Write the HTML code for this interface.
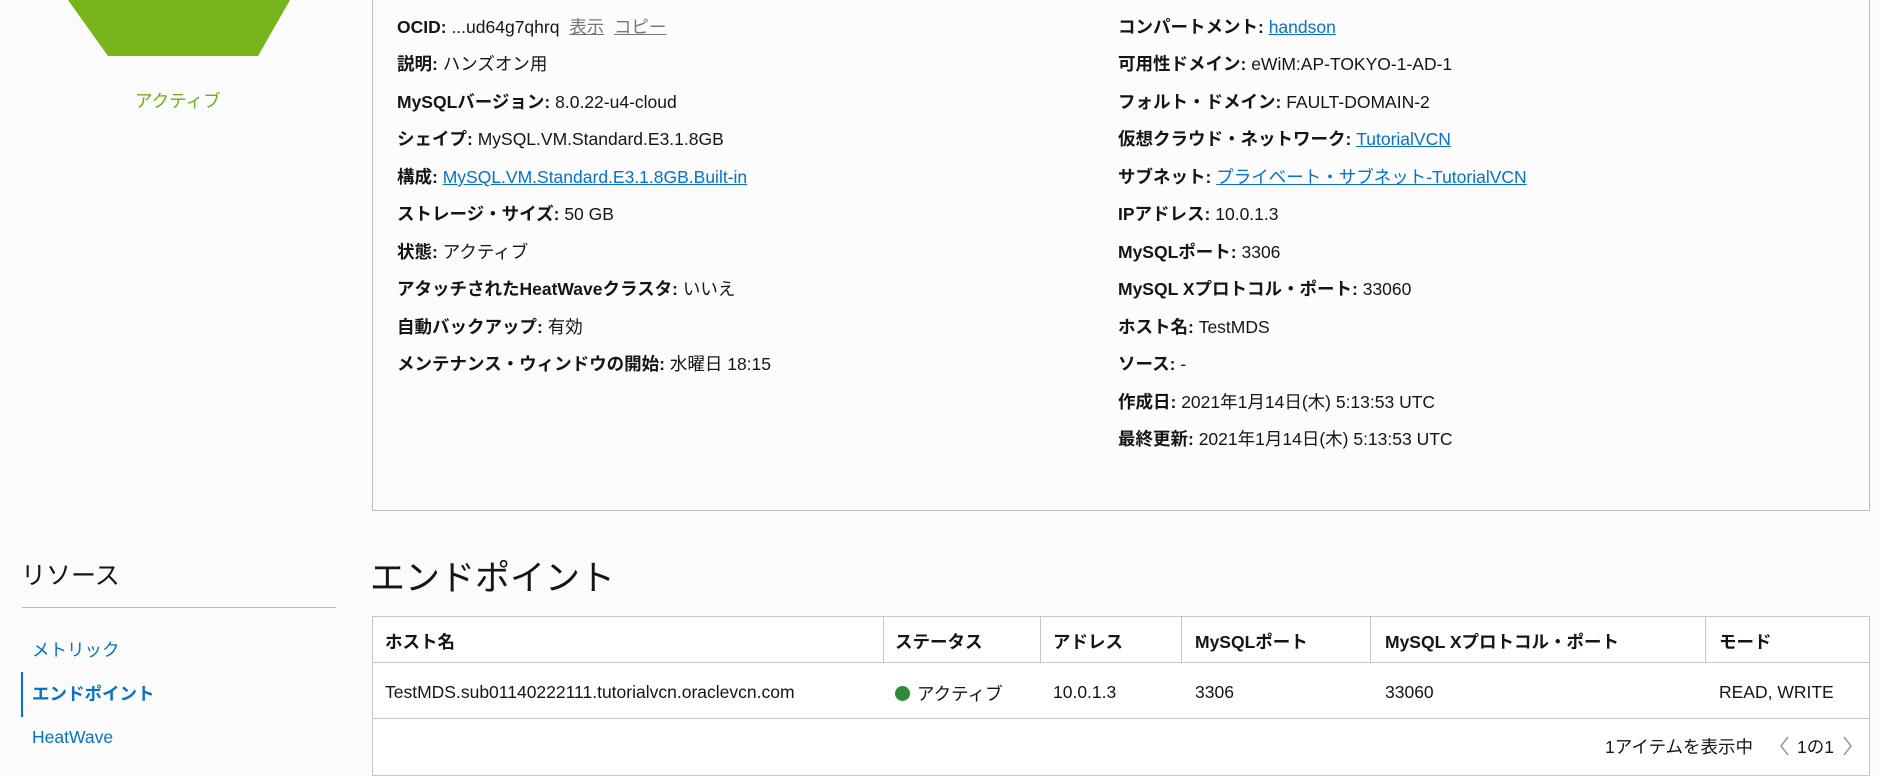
<!DOCTYPE html>
<html><head><meta charset="utf-8"><style>
*{margin:0;padding:0;box-sizing:border-box}
body{width:1880px;height:762px;overflow:hidden;background:#fbfbfb;font-family:"Liberation Sans","Noto Sans CJK JP",sans-serif;color:#161513;font-size:17.5px;position:relative}
.a{position:absolute;white-space:nowrap}
b{font-weight:bold}
a{color:#0572ce;text-decoration:underline}
.g{color:#767676;text-decoration:underline}
.row{position:absolute;white-space:nowrap;line-height:20px}
.box{position:absolute;left:372px;top:-2px;width:1498px;height:513px;border:1px solid #bcbcbc;background:#fcfcfc}
.tbl{position:absolute;left:372px;top:616px;width:1498px;height:160px;border:1px solid #c4c6ca;background:#fff}
.h{position:absolute;left:0;right:0;top:0;height:46px;border-bottom:1px solid #c4c6ca}
.d{position:absolute;left:0;right:0;top:46px;height:56px;border-bottom:1px solid #c4c6ca}
.v{position:absolute;top:0;height:46px;width:1px;background:#c4c6ca}
</style></head><body>
<svg class="a" style="left:0;top:0" width="340" height="60"><polygon points="68,0 290,0 258,56 108,56" fill="#78b41c"/></svg>
<div class="a" style="left:135px;top:88px;color:#6fae1a">アクティブ</div>
<div class="box"></div>
<div class="row" style="left:397px;top:17px"><b>OCID:</b> ...ud64g7qhrq &nbsp;<span class="g">表示</span>&nbsp; <span class="g">コピー</span></div>
<div class="row" style="left:397px;top:54px"><b>説明:</b> ハンズオン用</div>
<div class="row" style="left:397px;top:92px"><b>MySQLバージョン:</b> 8.0.22-u4-cloud</div>
<div class="row" style="left:397px;top:129px"><b>シェイプ:</b> MySQL.VM.Standard.E3.1.8GB</div>
<div class="row" style="left:397px;top:167px"><b>構成:</b> <a>MySQL.VM.Standard.E3.1.8GB.Built-in</a></div>
<div class="row" style="left:397px;top:204px"><b>ストレージ・サイズ:</b> 50 GB</div>
<div class="row" style="left:397px;top:242px"><b>状態:</b> アクティブ</div>
<div class="row" style="left:397px;top:279px"><b>アタッチされたHeatWaveクラスタ:</b> いいえ</div>
<div class="row" style="left:397px;top:317px"><b>自動バックアップ:</b> 有効</div>
<div class="row" style="left:397px;top:354px"><b>メンテナンス・ウィンドウの開始:</b> 水曜日 18:15</div>
<div class="row" style="left:1118px;top:17px"><b>コンパートメント:</b> <a>handson</a></div>
<div class="row" style="left:1118px;top:54px"><b>可用性ドメイン:</b> eWiM:AP-TOKYO-1-AD-1</div>
<div class="row" style="left:1118px;top:92px"><b>フォルト・ドメイン:</b> FAULT-DOMAIN-2</div>
<div class="row" style="left:1118px;top:129px"><b>仮想クラウド・ネットワーク:</b> <a>TutorialVCN</a></div>
<div class="row" style="left:1118px;top:167px"><b>サブネット:</b> <a>プライベート・サブネット-TutorialVCN</a></div>
<div class="row" style="left:1118px;top:204px"><b>IPアドレス:</b> 10.0.1.3</div>
<div class="row" style="left:1118px;top:242px"><b>MySQLポート:</b> 3306</div>
<div class="row" style="left:1118px;top:279px"><b>MySQL Xプロトコル・ポート:</b> 33060</div>
<div class="row" style="left:1118px;top:317px"><b>ホスト名:</b> TestMDS</div>
<div class="row" style="left:1118px;top:354px"><b>ソース:</b> -</div>
<div class="row" style="left:1118px;top:392px"><b>作成日:</b> 2021年1月14日(木) 5:13:53 UTC</div>
<div class="row" style="left:1118px;top:429px"><b>最終更新:</b> 2021年1月14日(木) 5:13:53 UTC</div>

<div class="a" style="left:21px;top:556px;font-size:25px">リソース</div>
<div class="a" style="left:22px;top:607px;width:314px;height:1px;background:#bcbcbc"></div>
<div class="a" style="left:32px;top:637px;color:#0572ce">メトリック</div>
<div class="a" style="left:21px;top:672px;width:2px;height:45px;background:#0572ce"></div>
<div class="a" style="left:32px;top:681px;color:#0572ce;font-weight:bold">エンドポイント</div>
<div class="a" style="left:32px;top:727px;color:#0572ce">HeatWave</div>
<div class="a" style="left:370px;top:550px;font-size:35px">エンドポイント</div>

<div class="tbl">
<div class="h"></div><div class="d"></div>
<div class="v" style="left:510px"></div><div class="v" style="left:667px"></div><div class="v" style="left:808px"></div><div class="v" style="left:997px"></div><div class="v" style="left:1332px"></div>
<div class="a" style="left:12px;top:12px;font-weight:bold">ホスト名</div>
<div class="a" style="left:522px;top:12px;font-weight:bold">ステータス</div>
<div class="a" style="left:680px;top:12px;font-weight:bold">アドレス</div>
<div class="a" style="left:822px;top:12px;font-weight:bold">MySQLポート</div>
<div class="a" style="left:1012px;top:12px;font-weight:bold">MySQL Xプロトコル・ポート</div>
<div class="a" style="left:1346px;top:12px;font-weight:bold">モード</div>
<div class="a" style="left:12px;top:65px">TestMDS.sub01140222111.tutorialvcn.oraclevcn.com</div>
<div class="a" style="left:522px;top:69px;width:15px;height:15px;border-radius:50%;background:#2f8a3a"></div>
<div class="a" style="left:544px;top:64px">アクティブ</div>
<div class="a" style="left:680px;top:65px">10.0.1.3</div>
<div class="a" style="left:822px;top:65px">3306</div>
<div class="a" style="left:1012px;top:65px">33060</div>
<div class="a" style="left:1346px;top:65px">READ, WRITE</div>
<div class="a" style="left:1232px;top:117px">1アイテムを表示中</div>
<svg class="a" style="left:1404px;top:118px" width="14" height="22"><path d="M11 2 L4 11 L11 20" stroke="#999" stroke-width="1.5" fill="none"/></svg>
<div class="a" style="left:1424px;top:117px">1の1</div>
<svg class="a" style="left:1468px;top:118px" width="14" height="22"><path d="M3 2 L10 11 L3 20" stroke="#999" stroke-width="1.5" fill="none"/></svg>
</div>
</body></html>
